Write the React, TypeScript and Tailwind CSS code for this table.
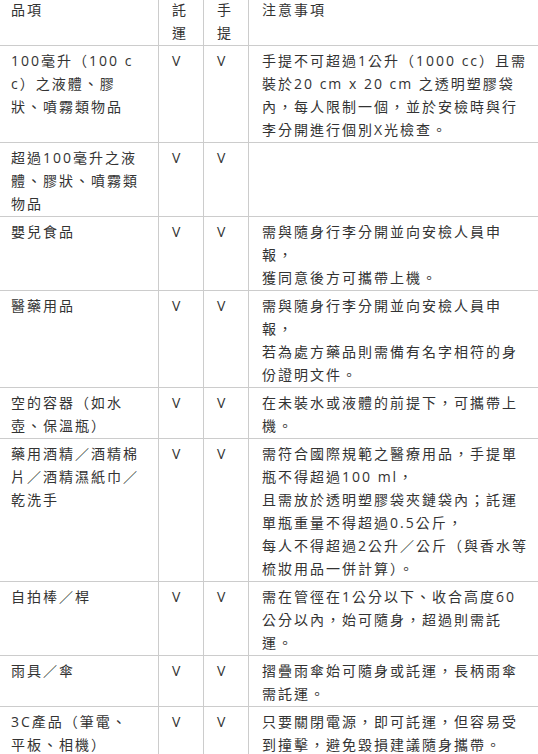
import React from "react";

type Row = { item: string[]; check: string; carry: string; note: string[] };

const rows: Row[] = [
  {
    item: ["100毫升（100 c", "c）之液體、膠", "狀、噴霧類物品"],
    check: "V",
    carry: "V",
    note: [
      "手提不可超過1公升（1000 cc）且需",
      "裝於20 cm x 20 cm 之透明塑膠袋",
      "內，每人限制一個，並於安檢時與行",
      "李分開進行個別X光檢查。",
    ],
  },
  {
    item: ["超過100毫升之液", "體、膠狀、噴霧類", "物品"],
    check: "V",
    carry: "V",
    note: [],
  },
  {
    item: ["嬰兒食品"],
    check: "V",
    carry: "V",
    note: ["需與隨身行李分開並向安檢人員申", "報，", "獲同意後方可攜帶上機。"],
  },
  {
    item: ["醫藥用品"],
    check: "V",
    carry: "V",
    note: [
      "需與隨身行李分開並向安檢人員申",
      "報，",
      "若為處方藥品則需備有名字相符的身",
      "份證明文件。",
    ],
  },
  {
    item: ["空的容器（如水", "壺、保溫瓶）"],
    check: "V",
    carry: "V",
    note: ["在未裝水或液體的前提下，可攜帶上", "機。"],
  },
  {
    item: ["藥用酒精／酒精棉", "片／酒精濕紙巾／", "乾洗手"],
    check: "V",
    carry: "V",
    note: [
      "需符合國際規範之醫療用品，手提單",
      "瓶不得超過100 ml，",
      "且需放於透明塑膠袋夾鏈袋內；託運",
      "單瓶重量不得超過0.5公斤，",
      "每人不得超過2公升／公斤（與香水等",
      "梳妝用品一併計算）。",
    ],
  },
  {
    item: ["自拍棒／桿"],
    check: "V",
    carry: "V",
    note: ["需在管徑在1公分以下、收合高度60", "公分以內，始可隨身，超過則需託", "運。"],
  },
  {
    item: ["雨具／傘"],
    check: "V",
    carry: "V",
    note: ["摺疊雨傘始可隨身或託運，長柄雨傘", "需託運。"],
  },
  {
    item: ["3C產品（筆電、", "平板、相機）"],
    check: "V",
    carry: "V",
    note: ["只要關閉電源，即可託運，但容易受", "到撞擊，避免毀損建議隨身攜帶。"],
  },
];

function Lines({ lines }: { lines: string[] }) {
  return (
    <>
      {lines.map((l, i) => (
        <div key={i} className="h-[23px] whitespace-nowrap">
          {l}
        </div>
      ))}
    </>
  );
}

const cell =
  "border border-[#cccccc] align-top px-[13px] pt-[3px] pb-[1px] text-left font-normal";

export default function App() {
  return (
    <div className="w-[538px] h-[754px] overflow-hidden bg-white">
      <div
        className="-mt-[6px] -ml-[3px] text-[14px] leading-[23px] tracking-[2px] text-[#333333]"
        style={{
          fontFamily:
            '"Open Sans", "Noto Sans CJK TC", "Noto Sans CJK SC", sans-serif',
        }}
      >
        <table className="border-collapse table-fixed w-[560px]">
          <colgroup>
            <col className="w-[161px]" />
            <col className="w-[45px]" />
            <col className="w-[45px]" />
            <col className="w-[309px]" />
          </colgroup>
          <thead>
            <tr>
              <th className={cell}>
                <Lines lines={["品項"]} />
              </th>
              <th className={cell}>
                <Lines lines={["託", "運"]} />
              </th>
              <th className={cell}>
                <Lines lines={["手", "提"]} />
              </th>
              <th className={cell}>
                <Lines lines={["注意事項"]} />
              </th>
            </tr>
          </thead>
          <tbody>
            {rows.map((r, i) => (
              <tr key={i}>
                <td className={cell}>
                  <Lines lines={r.item} />
                </td>
                <td className={cell}>
                  <Lines lines={[r.check]} />
                </td>
                <td className={cell}>
                  <Lines lines={[r.carry]} />
                </td>
                <td className={cell}>
                  <Lines lines={r.note} />
                </td>
              </tr>
            ))}
          </tbody>
        </table>
      </div>
    </div>
  );
}
